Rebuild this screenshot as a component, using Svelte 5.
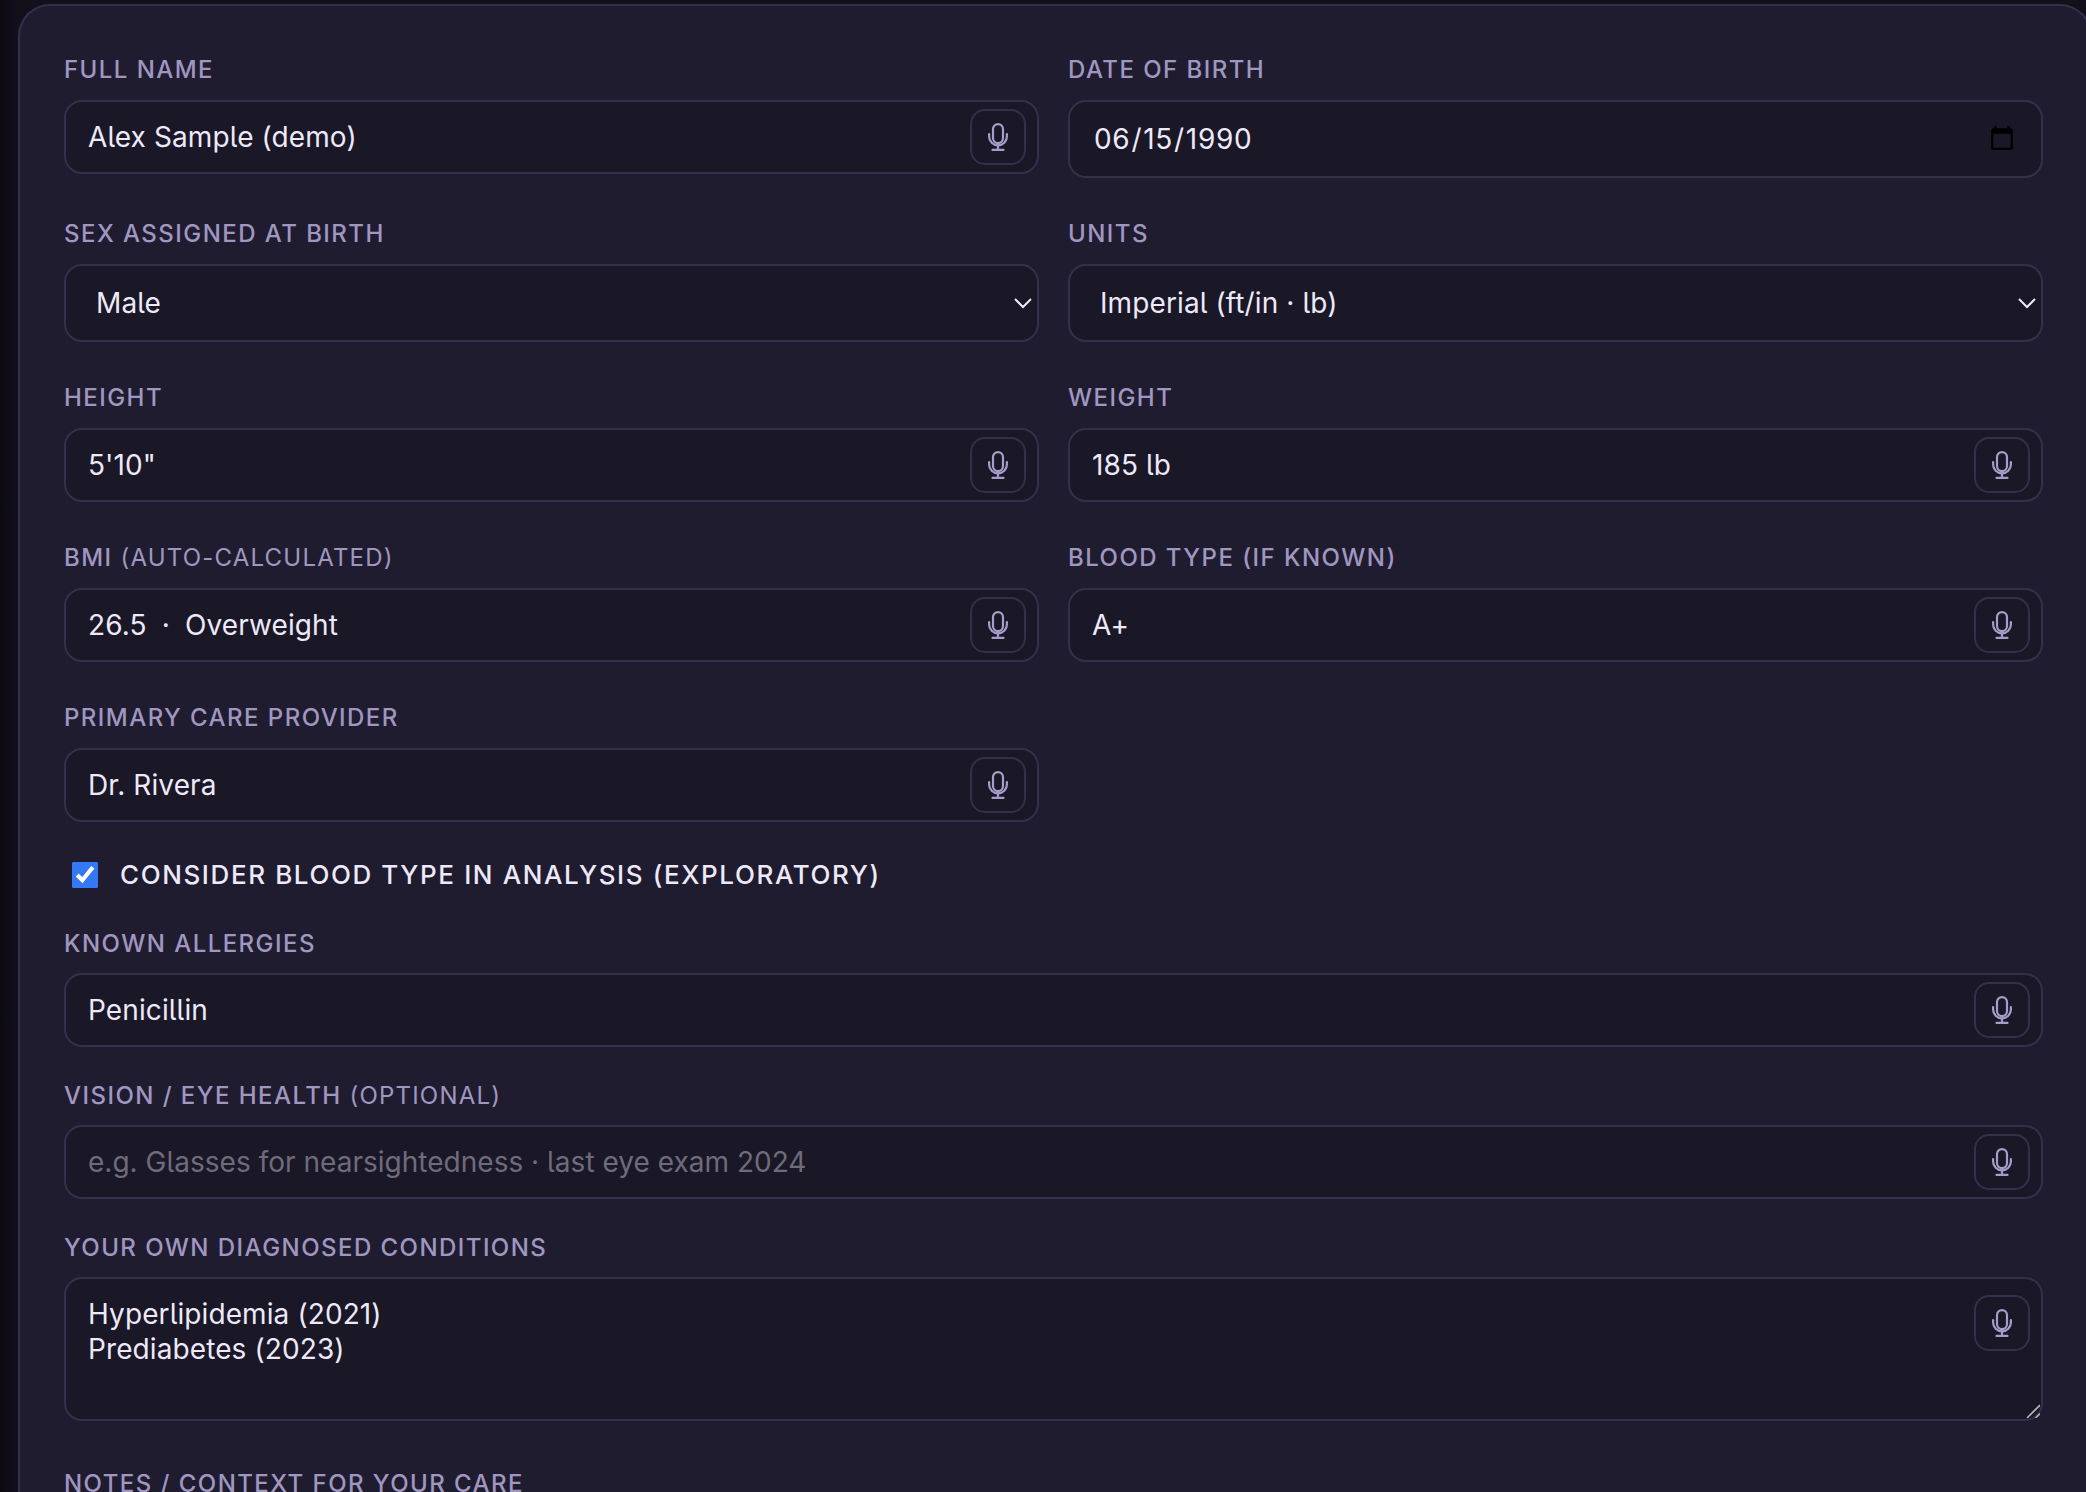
<script>
  let sex = "male";
  let units = "imperial";
</script>

{#snippet mic()}
  <button class="mic" type="button" aria-label="Dictate">
    <svg width="20" height="28" viewBox="0 0 20 28" fill="none" stroke="currentColor" stroke-width="2.200" stroke-linecap="round">
      <rect x="5" y="1.100" width="10" height="19" rx="5" />
      <path d="M1.100 11v2.500a8.900 8.900 0 0 0 17.800 0V11" />
      <path d="M10 22.500V26.900" />
      <path d="M4.500 26.900h11" />
    </svg>
  </button>
{/snippet}

{#snippet chevron()}
  <svg class="chevron" width="18" height="12" viewBox="0 0 18 12" fill="none" stroke="currentColor" stroke-width="2">
    <path d="M1 2l8 8 8-8" />
  </svg>
{/snippet}

{#snippet textField(label, value, hint = "", placeholder = "")}
  <div class="field">
    <label>{label}{#if hint}{" "}<span class="hint">{hint}</span>{/if}</label>
    <div class="control">
      <input type="text" {value} {placeholder} />
      {@render mic()}
    </div>
  </div>
{/snippet}

<main class="card">
  <div class="grid">
    {@render textField("Full name", "Alex Sample (demo)")}
    <div class="field">
      <label>Date of birth</label>
      <input type="date" value="1990-06-15" />
    </div>

    <div class="field">
      <label>Sex assigned at birth</label>
      <div class="control">
        <select bind:value={sex}>
          <option value="male">Male</option>
          <option value="female">Female</option>
        </select>
        {@render chevron()}
      </div>
    </div>
    <div class="field">
      <label>Units</label>
      <div class="control">
        <select bind:value={units}>
          <option value="imperial">Imperial (ft/in · lb)</option>
          <option value="metric">Metric (cm · kg)</option>
        </select>
        {@render chevron()}
      </div>
    </div>

    {@render textField("Height", "5'10\"")}
    {@render textField("Weight", "185 lb")}

    {@render textField("BMI", "26.5 \u2005·\u2005 Overweight", "(auto-calculated)")}
    {@render textField("Blood type (if known)", "A+")}

    {@render textField("Primary care provider", "Dr. Rivera")}
  </div>

  <label class="check">
    <input type="checkbox" checked />
    <span>Consider blood type in analysis (exploratory)</span>
  </label>

  <div class="stack">
    {@render textField("Known allergies", "Penicillin")}
    {@render textField("Vision / eye health", "", "(optional)", "e.g. Glasses for nearsightedness · last eye exam 2024")}
    <div class="field">
      <label>Your own diagnosed conditions</label>
      <div class="control area">
        <textarea rows="4" value={"Hyperlipidemia (2021)\nPrediabetes (2023)"}></textarea>
        {@render mic()}
        <svg class="grip" width="14" height="14" viewBox="0 0 14 14" stroke="currentColor" stroke-width="1.600">
          <path d="M1 14L14 1" />
          <path d="M9.500 14L14 9.500" />
        </svg>
      </div>
    </div>
    <div class="field notes">
      <label>Notes / context for your care</label>
    </div>
  </div>
</main>

<style>
  :global(body) {
    background: linear-gradient(90deg, #0b0910, #13101c 18px);
    overflow: hidden;
    height: 1492px;
  }
  .card {
    box-sizing: border-box;
    margin: 4px -6px 0 18px;
    padding: 54px 47px 0 44px;
    height: 1488px;
    background: #201c30;
    border: 2px solid #352f4c;
    border-bottom: 0;
    border-radius: 32px 32px 0 0;
    font-family: Inter, "Noto Sans", sans-serif;
    font-feature-settings: "cv05";
    color: #ede9f8;
  }
  .grid {
    display: grid;
    grid-template-columns: 975px 975px;
    column-gap: 29px;
    row-gap: 46px;
  }
  .field {
    display: flex;
    flex-direction: column;
    gap: 20px;
  }
  label {
    display: block;
    line-height: 20px;
    font-size: 24px;
    font-weight: 550;
    letter-spacing: 1.450px;
    text-transform: uppercase;
    color: #a097c0;
  }
  .hint {
    font-weight: 400;
    letter-spacing: 1.200px;
  }
  .control {
    position: relative;
  }
  input[type="text"],
  input[type="date"],
  select,
  textarea {
    display: block;
    box-sizing: border-box;
    width: 100%;
    background: #1a1726;
    border: 2px solid #352f4c;
    border-radius: 18px;
    padding: 0 22px;
    font: inherit;
    font-size: 28px;
    letter-spacing: 0.100px;
    color: #ede9f8;
    outline: none;
  }
  input[type="text"] {
    height: 74px;
    padding-right: 80px;
  }
  input::placeholder {
    color: #6f6b7c;
    letter-spacing: 0.020px;
  }
  input[type="date"] {
    height: 78px;
    letter-spacing: 0.700px;
    padding: 0 23px;
  }
  select {
    height: 78px;
    appearance: none;
    padding-left: 30px;
  }
  textarea {
    height: 144px;
    padding: 18px 22px;
    line-height: 35px;
    resize: none;
  }
  .chevron {
    position: absolute;
    top: 33px;
    right: 7px;
    pointer-events: none;
    color: #ede9f8;
  }
  .grip {
    position: absolute;
    right: 3px;
    bottom: 3px;
    color: #b4b4b8;
    pointer-events: none;
  }
  .mic {
    position: absolute;
    top: 9px;
    right: 13px;
    box-sizing: border-box;
    display: flex;
    align-items: center;
    justify-content: center;
    width: 56px;
    height: 56px;
    padding: 0;
    background: transparent;
    border: 2px solid #352f4c;
    border-radius: 15px;
    color: #a79dc9;
  }
  .area .mic {
    top: 18px;
  }
  .check {
    display: flex;
    align-items: center;
    gap: 22px;
    margin: 40px 0 0 8px;
    line-height: 26px;
    font-size: 26px;
    font-weight: 500;
    letter-spacing: 1.600px;
    color: #ede9f8;
  }
  .check input {
    width: 26px;
    height: 26px;
    margin: 0;
    accent-color: #3478f6;
  }
  .stack {
    display: flex;
    flex-direction: column;
    gap: 39px;
    margin-top: 46px;
  }
  .stack .field {
    gap: 19px;
  }
  .stack .notes {
    margin-top: 14px;
  }
</style>
